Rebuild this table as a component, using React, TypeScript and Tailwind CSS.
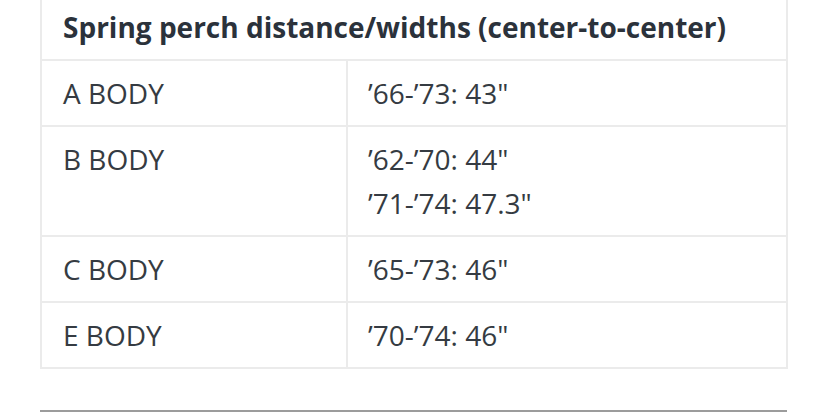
export default function App() {
  const rows: { label: string; values: string[] }[] = [
    { label: "A BODY", values: ["’66-’73: 43\""] },
    { label: "B BODY", values: ["’62-’70: 44\"", "’71-’74: 47.3\""] },
    { label: "C BODY", values: ["’65-’73: 46\""] },
    { label: "E BODY", values: ["’70-’74: 46\""] },
  ];
  return (
    <div
      className="w-[828px] h-[416px] bg-white overflow-hidden"
      style={{ fontFamily: '"Open Sans", "Noto Sans", sans-serif' }}
    >
      <div className="ml-[40px] w-[748px] -mt-[5px]">
        <div className="border-x-2 border-b-2 border-[#ebebeb]">
          <div className="px-[21px] py-[10px] text-[28px] leading-[44px] font-bold text-[#2b323b] border-b-2 border-[#ebebeb]">
            Spring perch distance/widths (center-to-center)
          </div>
          {rows.map((r, i) => (
            <div
              key={r.label}
              className={`grid grid-cols-[304px_1fr] ${i < rows.length - 1 ? "border-b-2 border-[#ebebeb]" : ""}`}
            >
              <div className="px-[21px] py-[10px] text-[28px] leading-[44px] text-[#353b42]">
                {r.label}
              </div>
              <div className="border-l-2 border-[#ebebeb] px-[20px] py-[10px] text-[28px] leading-[44px] text-[#353b42]">
                {r.values.map((v) => (
                  <div key={v}>{v}</div>
                ))}
              </div>
            </div>
          ))}
        </div>
        <div className="mt-[41px] h-[2px] w-[747px] bg-[#9c9c9c]" />
      </div>
    </div>
  );
}
